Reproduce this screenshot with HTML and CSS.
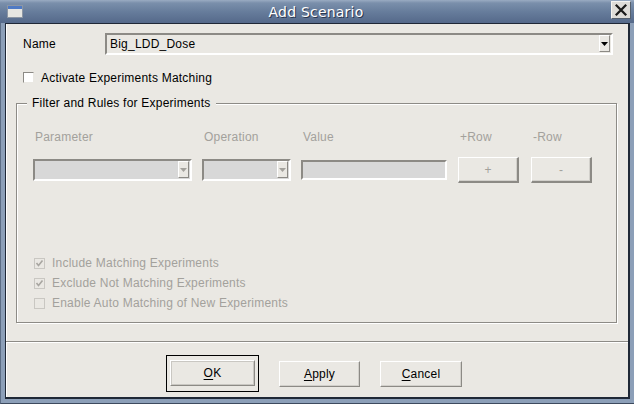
FILE: index.html
```html
<!DOCTYPE html>
<html>
<head>
<meta charset="utf-8">
<title>Add Scenario</title>
<link rel="stylesheet" href="styles.css">
</head>
<body>
<div class="window">
  <div class="titlebar">
    <span class="app-icon">
      <svg width="16" height="13" viewBox="0 0 16 13">
        <rect x="0.5" y="0.5" width="15" height="12" fill="#e6e6e2" stroke="#8c96a4"/>
        <rect x="1" y="1" width="14" height="3" fill="#4f7ac4"/>
      </svg>
    </span>
    <span class="title">Add Scenario</span>
    <span class="close">
      <svg width="19" height="17" viewBox="0 0 19 17">
        <path d="M4 2.5 L15 13.5 M15 2.5 L4 13.5" stroke="#1a1a1a" stroke-width="2.4"/>
      </svg>
    </span>
  </div>
  <div class="frame">
    <div class="client">
      <div class="body">
        <div class="name-row">
          <span class="name-label">Name</span>
          <div class="combo">
            <span class="combo-text">Big_LDD_Dose</span>
            <span class="combo-btn">
              <svg width="7" height="4" viewBox="0 0 7 4"><path d="M0 0 H7 L3.5 4 Z" fill="#000"/></svg>
            </span>
          </div>
        </div>
        <div class="check-row">
          <span class="checkbox"></span>
          <span>Activate Experiments Matching</span>
        </div>
        <fieldset class="group">
          <legend>Filter and Rules for Experiments</legend>
          <div class="group-body">
            <div class="rules">
              <span class="head">Parameter</span>
              <span class="head">Operation</span>
              <span class="head">Value</span>
              <span class="head">+Row</span>
              <span class="head">-Row</span>
              <div class="combo dis w-param">
                <span class="combo-text"></span>
                <span class="combo-btn">
                  <svg width="7" height="4" viewBox="0 0 7 4"><path d="M0 0 H7 L3.5 4 Z" fill="#a3a19c"/></svg>
                </span>
              </div>
              <div class="combo dis w-op">
                <span class="combo-text"></span>
                <span class="combo-btn">
                  <svg width="7" height="4" viewBox="0 0 7 4"><path d="M0 0 H7 L3.5 4 Z" fill="#a3a19c"/></svg>
                </span>
              </div>
              <div class="field dis"></div>
              <div class="btn small dis">+</div>
              <div class="btn small dis">-</div>
            </div>
            <div class="options">
              <div class="opt">
                <span class="checkbox dis checked">
                  <svg width="9" height="9" viewBox="0 0 9 9"><path d="M1.5 4 L3.5 6.5 L7.5 1.5" stroke="#a8a6a1" stroke-width="1.6" fill="none"/></svg>
                </span>
                <span>Include Matching Experiments</span>
              </div>
              <div class="opt">
                <span class="checkbox dis checked">
                  <svg width="9" height="9" viewBox="0 0 9 9"><path d="M1.5 4 L3.5 6.5 L7.5 1.5" stroke="#a8a6a1" stroke-width="1.6" fill="none"/></svg>
                </span>
                <span>Exclude Not Matching Experiments</span>
              </div>
              <div class="opt">
                <span class="checkbox dis"></span>
                <span>Enable Auto Matching of New Experiments</span>
              </div>
            </div>
          </div>
        </fieldset>
      </div>
      <div class="separator"></div>
      <div class="buttons">
        <div class="default-frame"><div class="btn main"><span><u>O</u>K</span></div></div>
        <div class="btn main apply"><span><u>A</u>pply</span></div>
        <div class="btn main cancel"><span><u>C</u>ancel</span></div>
      </div>
    </div>
  </div>
</div>
</body>
</html>
```

FILE: styles.css
```css
* { box-sizing: border-box; }
html, body { margin: 0; padding: 0; }
body {
  width: 634px;
  height: 404px;
  overflow: hidden;
  font-family: "Liberation Sans", Arial, sans-serif;
  font-size: 12px;
  letter-spacing: 0.22px;
  color: #000;
  background: #7d91ac;
}
.window {
  width: 634px;
  height: 404px;
  display: flex;
  flex-direction: column;
  background: #8c9fb8;
}
.titlebar {
  height: 23px;
  flex: none;
  display: grid;
  grid-template-columns: 1fr auto 1fr;
  align-items: center;
  background: linear-gradient(#9aabc2 0, #7a8fab 3px, #667c9b 12px, #55698a 23px);
}
.app-icon {
  justify-self: start;
  margin-left: 7px;
  margin-top: -1px;
  display: flex;
}
.title {
  font-family: "DejaVu Sans", sans-serif;
  font-size: 14px;
  color: #fff;
  text-shadow: 1px 1px 0 #2b3750;
  letter-spacing: 0.2px;
  line-height: 16px;
  padding-right: 2px;
}
.close {
  justify-self: end;
  margin-right: 3px;
  margin-top: -3px;
  width: 20px;
  height: 18px;
  display: flex;
  align-items: center;
  justify-content: center;
  background: #dedcd8;
  border: 1px solid;
  border-color: #f4f4f2 #55606e #55606e #f4f4f2;
}
.frame {
  flex: 1;
  display: flex;
  padding: 0 4px 4px 4px;
  border-left: 1px solid #5c6d85;
  border-bottom: 1px solid #3d4a5e;
}
.client {
  flex: 1;
  display: flex;
  flex-direction: column;
  background: #eae8e3;
  border-style: solid;
  border-color: #1f2836;
  border-width: 1px 2px 2px 1px;
  box-shadow: inset 1px 0 0 #fff;
}
.body {
  padding: 9px 11px 0 10px;
}
.name-row {
  display: flex;
  align-items: center;
  padding-left: 7px;
  padding-right: 4px;
}
.name-label {
  width: 82px;
  flex: none;
}
.combo {
  flex: 1;
  height: 22px;
  display: flex;
  align-items: stretch;
  border-style: solid;
  border-width: 2px;
  border-color: #8c8a85 #ffffff #ffffff #8c8a85;
  background: #eae8e3;
}
.combo-text {
  flex: 1;
  padding-left: 3px;
  line-height: 18px;
}
.combo-btn {
  width: 11px;
  flex: none;
  display: flex;
  align-items: center;
  justify-content: center;
  border-style: solid;
  border-width: 1px;
  border-color: #ffffff #8c8a85 #8c8a85 #ffffff;
  margin: 0 1px 1px 0;
}
.check-row {
  display: flex;
  align-items: center;
  gap: 7px;
  margin-top: 17px;
  padding-left: 7px;
  height: 11px;
}
.checkbox {
  width: 11px;
  height: 11px;
  flex: none;
  background: #fff;
  border-style: solid;
  border-width: 1px;
  border-color: #8c8a85 #eae8e3 #eae8e3 #8c8a85;
  display: flex;
  align-items: center;
  justify-content: center;
}
.checkbox.dis {
  background: #eae8e3;
  border-color: #c9c7c2;
}
.group {
  margin: 13px 0 0 0;
  padding: 0;
  min-width: 0;
  border: 1px solid #8d8b86;
  box-shadow: inset 1px 1px 0 #fff, 1px 1px 0 #fff;
}
.group legend {
  margin-left: 10px;
  padding: 0 6px 0 5px;
  line-height: 14px;
  background: #eae8e3;
}
.group-body {
  padding: 20px 0 9px 16px;
}
.rules {
  display: grid;
  grid-template-columns: 169px 99px 157px 73px 61px;
  grid-template-rows: 14px 22px;
  row-gap: 15px;
  align-items: center;
}
.head {
  color: #a3a19c;
  padding-left: 2px;
  line-height: 14px;
}
.combo.dis {
  background: #d8d8d8;
  flex: none;
}
.combo.dis .combo-btn { background: #eae8e3; }
.w-param { width: 159px; }
.w-op { width: 89px; }
.field {
  width: 146px;
  height: 20px;
  border-style: solid;
  border-width: 2px;
  border-color: #8c8a85 #ffffff #ffffff #8c8a85;
  background: #d8d8d8;
}
.btn {
  display: flex;
  align-items: center;
  justify-content: center;
  border-style: solid;
  border-width: 1px;
  border-color: #ffffff #8c8a85 #8c8a85 #ffffff;
  box-shadow: inset -1px -1px 0 #d2d0cb;
  background: #eae8e3;
}
.btn.small {
  width: 61px;
  height: 26px;
  border-bottom-width: 2px;
  border-right-width: 2px;
}
.btn.dis { color: #a3a19c; }
.options {
  margin-top: 72px;
  display: flex;
  flex-direction: column;
}
.opt {
  height: 20px;
  display: flex;
  align-items: center;
  gap: 7px;
  padding-left: 1px;
  color: #a3a19c;
}
.separator {
  margin-top: 18px;
  height: 2px;
  border-top: 1px solid #8d8b86;
  border-bottom: 1px solid #fff;
}
.buttons {
  display: flex;
  align-items: center;
  gap: 20px;
  padding: 12px 0 0 160px;
}
.default-frame {
  width: 93px;
  height: 37px;
  border: 1px solid #000;
  padding: 4px 3px 5px 3px;
  display: flex;
}
.btn.main {
  height: 26px;
  width: 81px;
}
.default-frame .btn.main {
  flex: 1;
  width: auto;
  box-shadow: inset 1px 1px 0 #c9c7c2, inset -1px -1px 0 #c9c7c2;
}
.btn.main span { line-height: 14px; }
.btn.main u { text-underline-offset: 2px; }
.btn.cancel { width: 82px; }
```
